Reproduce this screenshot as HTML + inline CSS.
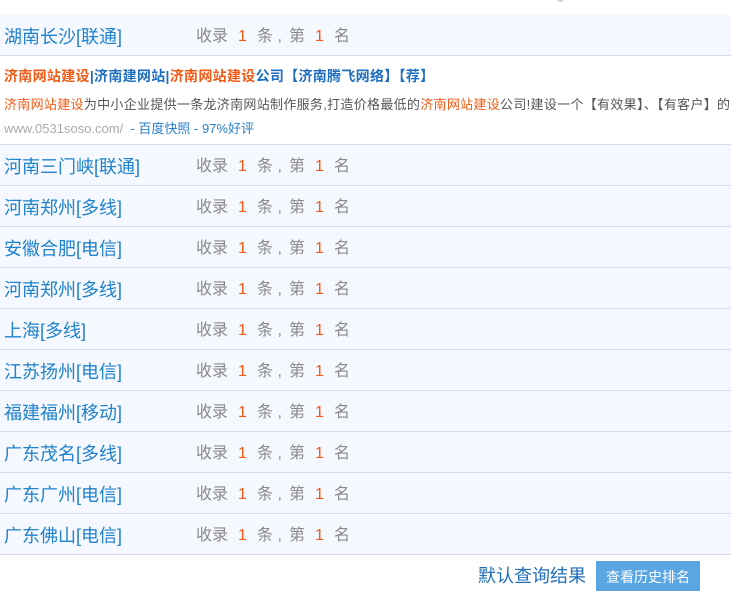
<!DOCTYPE html>
<html><head><meta charset="utf-8"><style>
*{margin:0;padding:0;box-sizing:border-box}
body{width:731px;height:584px;overflow:hidden;background:#fff;font-family:"Liberation Sans","Noto Sans CJK SC",sans-serif;position:relative}
.row{position:absolute;left:0;width:731px;height:41px;background:#f5f8fe;border-bottom:1px solid #d5dae5}
.loc{position:absolute;left:4px;top:11px;font-size:18px;color:#1f82cc;line-height:22px;white-space:nowrap}
.cnt span{position:absolute;top:12px;font-size:16px;color:#8a8a8a;line-height:20px;white-space:pre}
.cnt span.o{color:#f25a16}
.ad{position:absolute;left:0;top:56px;width:731px;height:89px;background:#fff;border-bottom:1px solid #d5dae5;overflow:hidden;white-space:nowrap}
.t{position:absolute;left:4px;top:10px;font-size:14px;font-weight:bold;color:#1e6fbf;letter-spacing:0.3px}
.d{position:absolute;left:4px;top:38px;font-size:13px;color:#555;letter-spacing:0.3px}
.u{position:absolute;left:4px;top:62px;font-size:13px;color:#aaa}
.r{color:#f25a16}
.b{color:#2a80cc}
</style></head><body>
<div style="position:absolute;left:556px;top:-6px;width:50px;height:8px;color:#bbb;font-size:10px">⚙ ▪▪▪</div>
<div id="rows"></div>
<div class="ad">
<div class="t"><span class="r">济南网站建设</span>|济南建网站|<span class="r">济南网站建设</span>公司【济南腾飞网络】【荐】</div>
<div class="d"><span class="r">济南网站建设</span>为中小企业提供一条龙济南网站制作服务,打造价格最低的<span class="r">济南网站建设</span>公司!建设一个【有效果】、【有客户】的<span class="r">济南</span></div>
<div class="u">www.0531soso.com/ &nbsp;<span class="b">- 百度快照 - 97%好评</span></div>
</div>
<div class="row" style="top:15px"><div class="loc">湖南长沙[联通]</div><div class="cnt"><span style="left:196px">收录</span><span class="o" style="left:238px">1</span><span style="left:257px">条 ,</span><span style="left:289px">第</span><span class="o" style="left:315px">1</span><span style="left:334px">名</span></div></div>
<div class="row" style="top:145px"><div class="loc">河南三门峡[联通]</div><div class="cnt"><span style="left:196px">收录</span><span class="o" style="left:238px">1</span><span style="left:257px">条 ,</span><span style="left:289px">第</span><span class="o" style="left:315px">1</span><span style="left:334px">名</span></div></div>
<div class="row" style="top:186px"><div class="loc">河南郑州[多线]</div><div class="cnt"><span style="left:196px">收录</span><span class="o" style="left:238px">1</span><span style="left:257px">条 ,</span><span style="left:289px">第</span><span class="o" style="left:315px">1</span><span style="left:334px">名</span></div></div>
<div class="row" style="top:227px"><div class="loc">安徽合肥[电信]</div><div class="cnt"><span style="left:196px">收录</span><span class="o" style="left:238px">1</span><span style="left:257px">条 ,</span><span style="left:289px">第</span><span class="o" style="left:315px">1</span><span style="left:334px">名</span></div></div>
<div class="row" style="top:268px"><div class="loc">河南郑州[多线]</div><div class="cnt"><span style="left:196px">收录</span><span class="o" style="left:238px">1</span><span style="left:257px">条 ,</span><span style="left:289px">第</span><span class="o" style="left:315px">1</span><span style="left:334px">名</span></div></div>
<div class="row" style="top:309px"><div class="loc">上海[多线]</div><div class="cnt"><span style="left:196px">收录</span><span class="o" style="left:238px">1</span><span style="left:257px">条 ,</span><span style="left:289px">第</span><span class="o" style="left:315px">1</span><span style="left:334px">名</span></div></div>
<div class="row" style="top:350px"><div class="loc">江苏扬州[电信]</div><div class="cnt"><span style="left:196px">收录</span><span class="o" style="left:238px">1</span><span style="left:257px">条 ,</span><span style="left:289px">第</span><span class="o" style="left:315px">1</span><span style="left:334px">名</span></div></div>
<div class="row" style="top:391px"><div class="loc">福建福州[移动]</div><div class="cnt"><span style="left:196px">收录</span><span class="o" style="left:238px">1</span><span style="left:257px">条 ,</span><span style="left:289px">第</span><span class="o" style="left:315px">1</span><span style="left:334px">名</span></div></div>
<div class="row" style="top:432px"><div class="loc">广东茂名[多线]</div><div class="cnt"><span style="left:196px">收录</span><span class="o" style="left:238px">1</span><span style="left:257px">条 ,</span><span style="left:289px">第</span><span class="o" style="left:315px">1</span><span style="left:334px">名</span></div></div>
<div class="row" style="top:473px"><div class="loc">广东广州[电信]</div><div class="cnt"><span style="left:196px">收录</span><span class="o" style="left:238px">1</span><span style="left:257px">条 ,</span><span style="left:289px">第</span><span class="o" style="left:315px">1</span><span style="left:334px">名</span></div></div>
<div class="row" style="top:514px"><div class="loc">广东佛山[电信]</div><div class="cnt"><span style="left:196px">收录</span><span class="o" style="left:238px">1</span><span style="left:257px">条 ,</span><span style="left:289px">第</span><span class="o" style="left:315px">1</span><span style="left:334px">名</span></div></div>
<div style="position:absolute;left:478px;top:565px;font-size:18px;color:#1f6fb8;line-height:22px">默认查询结果</div>
<div style="position:absolute;left:596px;top:561px;width:104px;height:30px;background:#5aa6e2;color:#fff;font-size:14px;text-align:center;line-height:32px">查看历史排名</div>
</body></html>
